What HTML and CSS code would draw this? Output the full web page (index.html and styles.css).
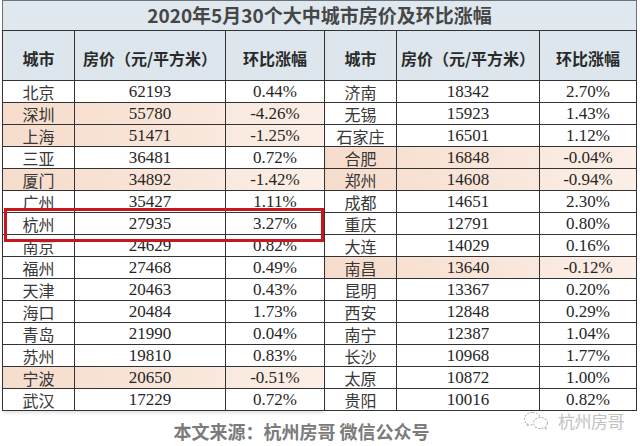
FILE: index.html
```html
<!DOCTYPE html>
<html lang="zh">
<head>
<meta charset="utf-8">
<link rel="stylesheet" href="styles.css">
</head>
<body>
<div class="sheet">
  <div class="title">2020年5月30个大中城市房价及环比涨幅</div>
  <div class="tables">
    <div class="tbl tbl-left">
      <div class="row head"><div class="c">城市</div><div class="c">房价（元/平方米）</div><div class="c">环比涨幅</div></div>
      <div class="row"><div class="c city">北京</div><div class="c num">62193</div><div class="c num">0.44%</div></div>
      <div class="row hl"><div class="c city">深圳</div><div class="c num">55780</div><div class="c num">-4.26%</div></div>
      <div class="row hl"><div class="c city">上海</div><div class="c num">51471</div><div class="c num">-1.25%</div></div>
      <div class="row"><div class="c city">三亚</div><div class="c num">36481</div><div class="c num">0.72%</div></div>
      <div class="row hl"><div class="c city">厦门</div><div class="c num">34892</div><div class="c num">-1.42%</div></div>
      <div class="row"><div class="c city">广州</div><div class="c num">35427</div><div class="c num">1.11%</div></div>
      <div class="row"><div class="c city">杭州</div><div class="c num">27935</div><div class="c num">3.27%</div></div>
      <div class="row"><div class="c city">南京</div><div class="c num">24629</div><div class="c num">0.82%</div></div>
      <div class="row"><div class="c city">福州</div><div class="c num">27468</div><div class="c num">0.49%</div></div>
      <div class="row"><div class="c city">天津</div><div class="c num">20463</div><div class="c num">0.43%</div></div>
      <div class="row"><div class="c city">海口</div><div class="c num">20484</div><div class="c num">1.73%</div></div>
      <div class="row"><div class="c city">青岛</div><div class="c num">21990</div><div class="c num">0.04%</div></div>
      <div class="row"><div class="c city">苏州</div><div class="c num">19810</div><div class="c num">0.83%</div></div>
      <div class="row hl"><div class="c city">宁波</div><div class="c num">20650</div><div class="c num">-0.51%</div></div>
      <div class="row"><div class="c city">武汉</div><div class="c num">17229</div><div class="c num">0.72%</div></div>
      <div class="markbox"></div>
    </div>
    <div class="tbl tbl-right">
      <div class="row head"><div class="c">城市</div><div class="c">房价（元/平方米）</div><div class="c">环比涨幅</div></div>
      <div class="row"><div class="c city">济南</div><div class="c num">18342</div><div class="c num">2.70%</div></div>
      <div class="row"><div class="c city">无锡</div><div class="c num">15923</div><div class="c num">1.43%</div></div>
      <div class="row"><div class="c city">石家庄</div><div class="c num">16501</div><div class="c num">1.12%</div></div>
      <div class="row hl"><div class="c city">合肥</div><div class="c num">16848</div><div class="c num">-0.04%</div></div>
      <div class="row hl"><div class="c city">郑州</div><div class="c num">14608</div><div class="c num">-0.94%</div></div>
      <div class="row"><div class="c city">成都</div><div class="c num">14651</div><div class="c num">2.30%</div></div>
      <div class="row"><div class="c city">重庆</div><div class="c num">12791</div><div class="c num">0.80%</div></div>
      <div class="row"><div class="c city">大连</div><div class="c num">14029</div><div class="c num">0.16%</div></div>
      <div class="row hl"><div class="c city">南昌</div><div class="c num">13640</div><div class="c num">-0.12%</div></div>
      <div class="row"><div class="c city">昆明</div><div class="c num">13367</div><div class="c num">0.20%</div></div>
      <div class="row"><div class="c city">西安</div><div class="c num">12848</div><div class="c num">0.29%</div></div>
      <div class="row"><div class="c city">南宁</div><div class="c num">12387</div><div class="c num">1.04%</div></div>
      <div class="row"><div class="c city">长沙</div><div class="c num">10968</div><div class="c num">1.77%</div></div>
      <div class="row"><div class="c city">太原</div><div class="c num">10872</div><div class="c num">1.00%</div></div>
      <div class="row"><div class="c city">贵阳</div><div class="c num">10016</div><div class="c num">0.82%</div></div>
    </div>
  </div>
  <div class="footer">本文来源：杭州房哥 微信公众号</div>
</div>
<div class="watermark">
  <svg class="wm-icon" width="26" height="19" viewBox="0 0 26 19">
    <path d="M9.5 1.5C5 1.5 1.5 4.3 1.5 7.8c0 2 1.1 3.7 2.9 4.9l-0.7 2.3 2.7-1.4c1 0.3 2 0.4 3.1 0.4" fill="none" stroke="#b4b4b4" stroke-width="1.1" stroke-dasharray="2 1.4"/>
    <path d="M9.5 1.5c4.2 0 7.6 2.5 8 5.7" fill="none" stroke="#b4b4b4" stroke-width="1.1" stroke-dasharray="2 1.4"/>
    <ellipse cx="17.5" cy="12" rx="7" ry="5.6" fill="#fff" stroke="#b4b4b4" stroke-width="1.1" stroke-dasharray="2 1.4"/>
    <path d="M21.5 16.8l1.6 1.6-0.3-2.3" fill="none" stroke="#b4b4b4" stroke-width="1"/>
  </svg>
  <span class="wm-text">杭州房哥</span>
</div>
</body>
</html>
```

FILE: styles.css
```css
html, body {
  margin: 0;
  padding: 0;
}
body {
  width: 640px;
  height: 446px;
  overflow: hidden;
  background: #fff;
  position: relative;
  font-family: "Noto Sans CJK SC", "Noto Sans", sans-serif;
  color: #333;
}
.sheet {
  margin-left: 2px;
  width: 635px;
}
.title {
  box-sizing: border-box;
  height: 30px;
  border: 1px solid #6d7478;
  border-bottom: none;
  background: #dfe8ee;
  color: #464646;
  font-weight: 700;
  font-size: 19px;
  line-height: 28px;
  text-align: center;
}
.tables {
  display: flex;
}
.tbl {
  border-top: 1px solid #333;
  display: flex;
  flex-direction: column;
}
.tbl-left {
  position: relative;
  border-left: 1px solid #333;
  box-shadow: 0 3px 3px -1px rgba(0, 0, 0, 0.12);
}
.row {
  display: grid;
  height: 22px;
  box-sizing: border-box;
  border-bottom: 1px solid #333;
}
.tbl-left .row {
  grid-template-columns: 72px 151px 99px;
}
.tbl-right .row {
  grid-template-columns: 72px 143px 97px;
}
.row.head {
  height: 50px;
  background: #dce6ec;
}
.row.hl {
  background: linear-gradient(90deg, #f6dccb 0%, #f9e6da 55%, #fcefe7 100%);
}
.c {
  box-sizing: border-box;
  border-right: 1px solid #333;
  display: flex;
  align-items: center;
  justify-content: center;
  white-space: nowrap;
}
.head .c {
  font-size: 16px;
  font-weight: 700;
  color: #2a2a2a;
  padding-top: 5px;
}
.city {
  font-size: 16px;
  color: #383838;
  line-height: 20px;
}
.num {
  font-family: "Liberation Serif", serif;
  font-size: 17px;
  color: #262626;
  line-height: 20px;
}
.markbox {
  position: absolute;
  left: 1px;
  top: 177px;
  width: 320px;
  height: 34px;
  box-sizing: border-box;
  border: 3px solid #c8161d;
}
.footer {
  height: 35px;
  box-sizing: border-box;
  padding-top: 8px;
  padding-right: 36px;
  line-height: 24px;
  font-size: 18px;
  font-weight: 700;
  color: #7b7b7b;
  text-align: center;
}
.watermark {
  position: absolute;
  left: 523px;
  top: 408px;
  display: flex;
  align-items: center;
  gap: 9px;
}
.wm-text {
  font-size: 17px;
  font-weight: 400;
  color: #c2c2c2;
  letter-spacing: -0.5px;
}
```
